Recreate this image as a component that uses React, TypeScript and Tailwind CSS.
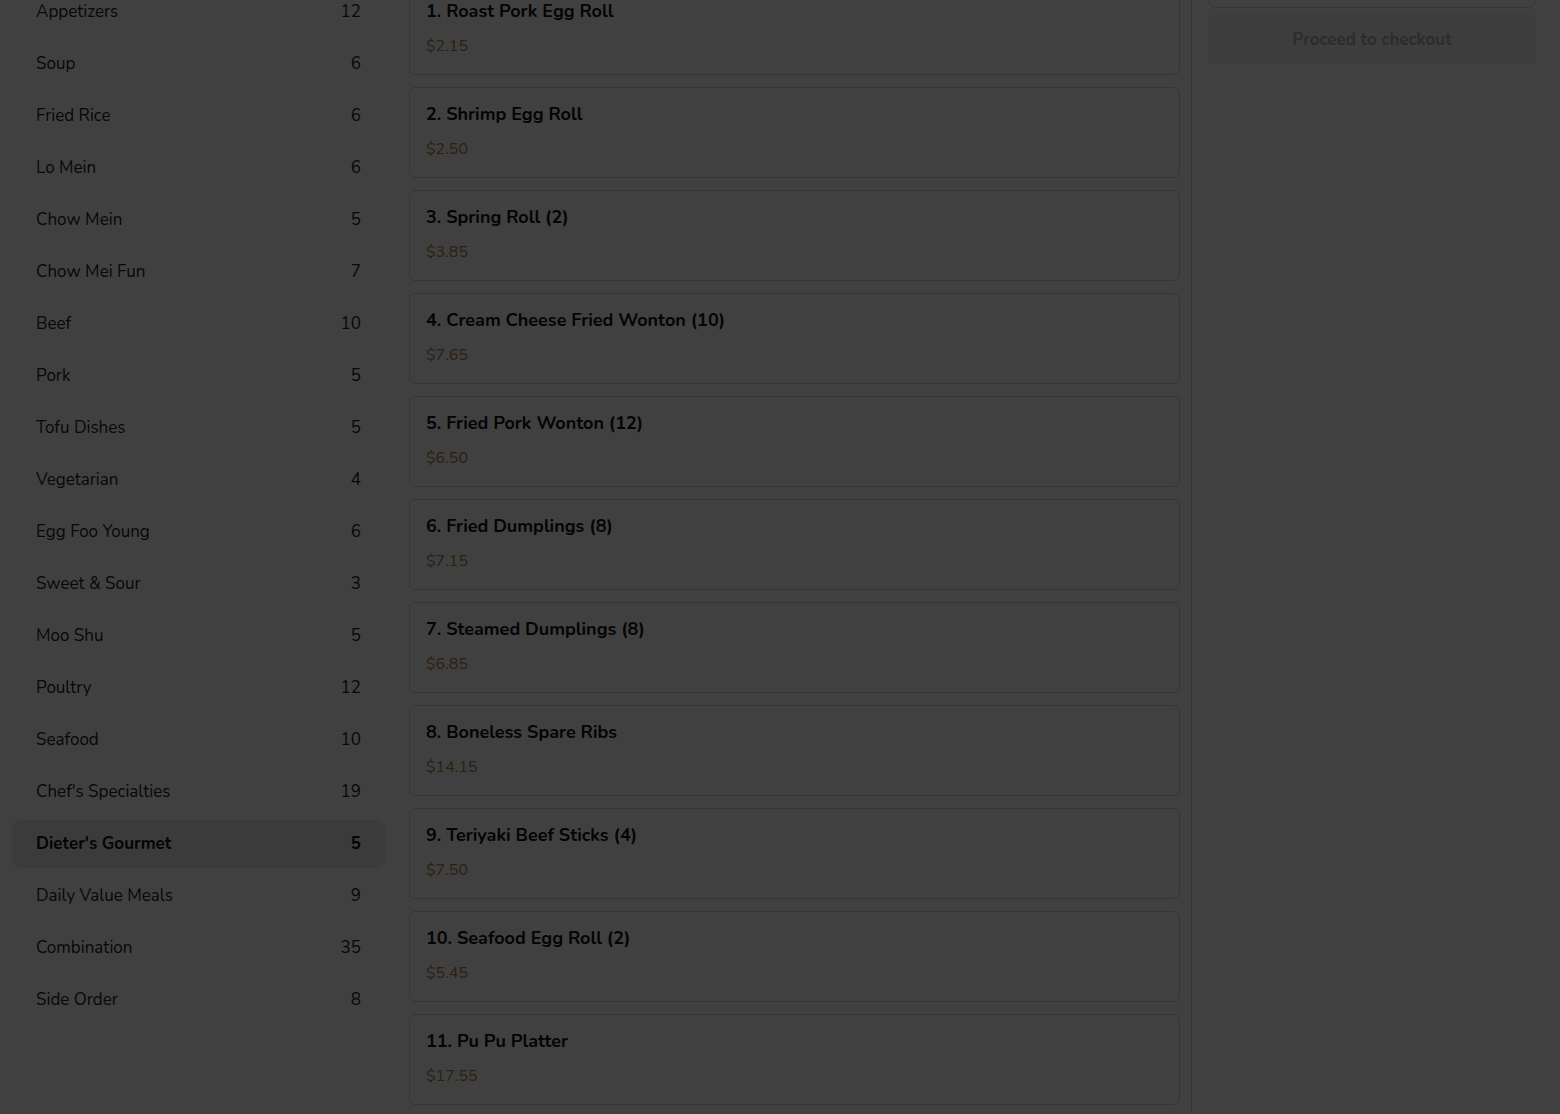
import React from "react";

type Category = { name: string; count: number };
type Item = { name: string; price: string };

const categories: Category[] = [
  { name: "Appetizers", count: 12 },
  { name: "Soup", count: 6 },
  { name: "Fried Rice", count: 6 },
  { name: "Lo Mein", count: 6 },
  { name: "Chow Mein", count: 5 },
  { name: "Chow Mei Fun", count: 7 },
  { name: "Beef", count: 10 },
  { name: "Pork", count: 5 },
  { name: "Tofu Dishes", count: 5 },
  { name: "Vegetarian", count: 4 },
  { name: "Egg Foo Young", count: 6 },
  { name: "Sweet & Sour", count: 3 },
  { name: "Moo Shu", count: 5 },
  { name: "Poultry", count: 12 },
  { name: "Seafood", count: 10 },
  { name: "Chef's Specialties", count: 19 },
  { name: "Dieter's Gourmet", count: 5 },
  { name: "Daily Value Meals", count: 9 },
  { name: "Combination", count: 35 },
  { name: "Side Order", count: 8 },
];

const items: Item[] = [
  { name: "1. Roast Pork Egg Roll", price: "$2.15" },
  { name: "2. Shrimp Egg Roll", price: "$2.50" },
  { name: "3. Spring Roll (2)", price: "$3.85" },
  { name: "4. Cream Cheese Fried Wonton (10)", price: "$7.65" },
  { name: "5. Fried Pork Wonton (12)", price: "$6.50" },
  { name: "6. Fried Dumplings (8)", price: "$7.15" },
  { name: "7. Steamed Dumplings (8)", price: "$6.85" },
  { name: "8. Boneless Spare Ribs", price: "$14.15" },
  { name: "9. Teriyaki Beef Sticks (4)", price: "$7.50" },
  { name: "10. Seafood Egg Roll (2)", price: "$5.45" },
  { name: "11. Pu Pu Platter", price: "$17.55" },
];

const active = "Dieter's Gourmet";

export default function App() {
  return (
    <div
      className="relative h-[1114px] overflow-hidden bg-white text-[#222]"
      style={{ fontFamily: "Nunito, Lato, 'Open Sans', sans-serif" }}
    >
      <div className="flex h-full">
        {/* categories */}
        <aside className="w-[397px] shrink-0 px-3">
          <ul className="-mt-[12px] flex flex-col gap-1">
            {categories.map((c) => {
              const on = c.name === active;
              return (
                <li
                  key={c.name}
                  className={
                    on
                      ? "flex h-12 items-center justify-between rounded-lg bg-[#ececec] px-6 text-[17px] font-bold text-[#111]"
                      : "flex h-12 items-center justify-between rounded-lg px-6 text-[17px] text-[#222]"
                  }
                >
                  <span>{c.name}</span>
                  <span>{c.count}</span>
                </li>
              );
            })}
          </ul>
        </aside>

        {/* menu items */}
        <main className="w-[795px] shrink-0 border-r border-[#d6d6d6] pl-3 pr-[11px]">
          <div className="-mt-[16px] flex flex-col gap-3">
            {items.map((it) => (
              <div
                key={it.name}
                className="h-[91px] rounded-md border border-[#d4d4d4] px-4 pt-[14px]"
              >
                <div className="text-[18px] font-bold leading-6 text-[#111]">{it.name}</div>
                <div className="mt-[11px] text-[16px] leading-6 text-[#b08040]">{it.price}</div>
              </div>
            ))}
          </div>
        </main>

        {/* cart */}
        <section className="flex-1 pl-4 pr-6">
          <div className="-mt-[40px] h-[48px] rounded-lg border border-[#d4d4d4]" />
          <button
            disabled
            className="mt-[6px] h-[50px] w-full rounded-md bg-[#f2f2f2] pt-[2px] text-[17px] font-bold text-[#b0b0b0]"
          >
            Proceed to checkout
          </button>
        </section>
      </div>

      {/* modal backdrop */}
      <div className="fixed inset-0 bg-black/75" />
    </div>
  );
}
